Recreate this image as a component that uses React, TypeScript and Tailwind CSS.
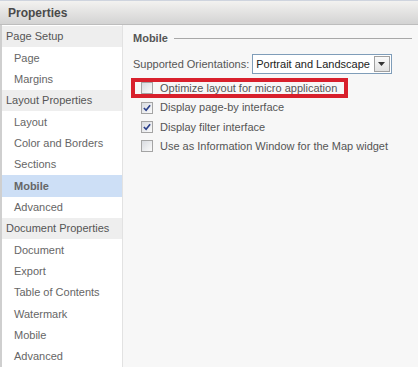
import React from 'react'

type NavItem = { label: string; header?: boolean; active?: boolean }

const navItems: NavItem[] = [
  { label: 'Page Setup', header: true },
  { label: 'Page' },
  { label: 'Margins' },
  { label: 'Layout Properties', header: true },
  { label: 'Layout' },
  { label: 'Color and Borders' },
  { label: 'Sections' },
  { label: 'Mobile', active: true },
  { label: 'Advanced' },
  { label: 'Document Properties', header: true },
  { label: 'Document' },
  { label: 'Export' },
  { label: 'Table of Contents' },
  { label: 'Watermark' },
  { label: 'Mobile' },
  { label: 'Advanced' },
]

function Checkbox({ checked }: { checked?: boolean }) {
  return (
    <span className="flex h-[12px] w-[12px] shrink-0 items-center justify-center border border-[#a4a4a4] bg-gradient-to-br from-[#d8dbe0] to-[#fbfbfb]">
      {checked && (
        <svg width="8" height="8" viewBox="0 0 9 9">
          <path d="M1 4.5 L3.5 7 L8 1.5" fill="none" stroke="#2a3f8a" strokeWidth="1.9" />
        </svg>
      )}
    </span>
  )
}

function OptionRow({ label, checked }: { label: string; checked?: boolean }) {
  return (
    <div className="flex h-[19.3px] items-center gap-[7px] pl-[8px]">
      <Checkbox checked={checked} />
      <span className="whitespace-nowrap">{label}</span>
    </div>
  )
}

export default function App() {
  return (
    <div className="flex h-[367px] w-[418px] flex-col overflow-hidden bg-[#f7f7f7] font-['Liberation_Sans',Arial,sans-serif] text-[11px] text-[#555]">
      {/* Title bar */}
      <div className="flex h-[25px] shrink-0 items-center border-t border-t-[#cfd4de] border-b border-b-[#bdbdbd] bg-gradient-to-b from-[#f3f2f0] to-[#d3d3d3] pl-[8px] text-[12px] font-bold text-[#4a4a4a]">
        Properties
      </div>

      <div className="flex min-h-0 flex-1">
        {/* Left nav */}
        <div className="flex w-[123px] shrink-0 flex-col border-l-2 border-l-[#cfcfcf] border-r border-r-[#e2e2e2] bg-white pt-[1px]">
          {navItems.map((item, i) =>
            item.header ? (
              <div key={i} className="flex h-[21.33px] shrink-0 items-center bg-[#eeeeee] pl-[4px] text-[#555]">
                {item.label}
              </div>
            ) : (
              <div
                key={i}
                className={`flex h-[21.33px] shrink-0 items-center pl-[12px] ${
                  item.active ? 'bg-[#cddff6] font-bold text-[#666]' : 'text-[#666]'
                }`}
              >
                {item.label}
              </div>
            )
          )}
        </div>

        {/* Right content */}
        <div className="flex flex-1 flex-col pl-[10px] pr-[6px] pt-[6px]">
          <div className="flex h-[15px] items-center gap-[6px]">
            <span className="font-bold text-[#555]">Mobile</span>
            <div className="h-px flex-1 bg-[#a8a8a8]" />
          </div>

          <div className="mt-[8px] flex h-[20px] items-center">
            <span>Supported Orientations:</span>
            <div className="ml-[3px] flex h-[20px] items-stretch border border-[#7f9db9] bg-white">
              <span className="flex items-center px-[3px] text-[#222]">Portrait and Landscape</span>
              <span className="m-[1px] flex w-[16px] items-center justify-center border border-[#a0a0a0] bg-gradient-to-b from-[#fafafa] to-[#e2e2e2]">
                <svg width="7" height="4" viewBox="0 0 7 4">
                  <path d="M0 0 H7 L3.5 4 Z" fill="#333" />
                </svg>
              </span>
            </div>
          </div>

          <div className="mt-[4px] flex flex-col">
            <div className="-ml-[2px] w-[217px] border-[4px] border-[#d8202c]">
              <div className="flex h-[12px] items-center gap-[7px] pl-[6px]">
                <Checkbox />
                <span className="whitespace-nowrap">Optimize layout for micro application</span>
              </div>
            </div>
            <OptionRow label="Display page-by interface" checked />
            <OptionRow label="Display filter interface" checked />
            <OptionRow label="Use as Information Window for the Map widget" />
          </div>
        </div>
      </div>
    </div>
  )
}
